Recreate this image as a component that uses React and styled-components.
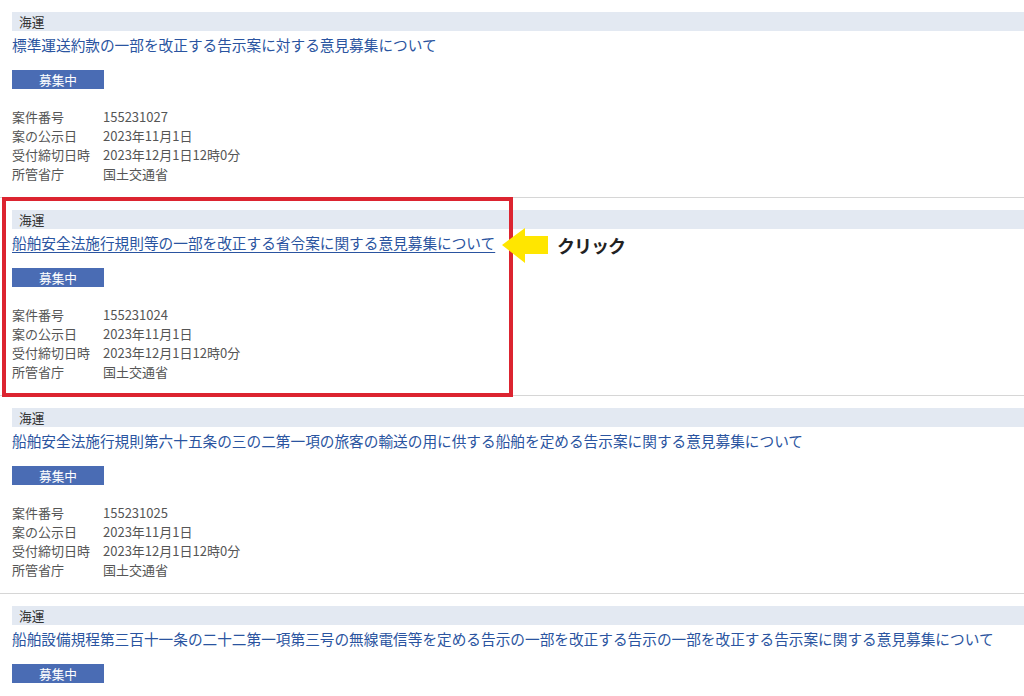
import React from 'react';
import styled, { createGlobalStyle } from 'styled-components';

const GlobalStyle = createGlobalStyle`
  html, body {
    margin: 0;
    padding: 0;
    background: #fff;
    font-family: "Noto Sans CJK JP", "Noto Sans", sans-serif;
  }
`;

const Page = styled.div`
  position: relative;
  width: 1024px;
  height: 696px;
  overflow: hidden;
  background: #fff;
`;

const Item = styled.div`
  padding: 12px 0 14px 12px;
  border-bottom: 1px solid #d6d6d6;
`;

const Category = styled.div`
  height: 19px;
  line-height: 19px;
  padding-left: 7px;
  background: #e3e9f2;
  color: #333;
  font-size: 12.7px;
`;

const Title = styled.a`
  display: block;
  margin-top: 3px;
  height: 22px;
  line-height: 22px;
  font-size: 14.66px;
  color: #2a54a0;
  white-space: nowrap;
  text-decoration: ${(p) => (p.$visited ? 'underline' : 'none')};
  text-underline-offset: 3px;
  cursor: pointer;
`;

const Badge = styled.div`
  margin-top: 14px;
  width: 92px;
  height: 19px;
  line-height: 19px;
  background: #4a6cb4;
  color: #fff;
  font-size: 12.7px;
  text-align: center;
`;

const Details = styled.dl`
  margin: 18px 0 0;
  display: grid;
  grid-template-columns: 91px auto;
  grid-auto-rows: 19px;
  line-height: 19px;
  font-size: 13px;
  color: #555;
`;

const Term = styled.dt`
  margin: 0;
`;

const Value = styled.dd`
  margin: 0;
`;

const Highlight = styled.div`
  position: absolute;
  left: 2px;
  top: 197px;
  width: 503px;
  height: 192px;
  border: 4px solid #dc2430;
  pointer-events: none;
`;

const Callout = styled.div`
  position: absolute;
  left: 502px;
  top: 227px;
  display: flex;
  align-items: center;
  gap: 8px;
`;

const CalloutText = styled.span`
  font-size: 18px;
  font-weight: 700;
  color: #222;
  letter-spacing: -1px;
`;

const Arrow = () => (
  <svg width="47" height="36" viewBox="0 0 47 36">
    <polygon points="0,18 23,1 23,9 46,9 46,27 23,27 23,36" fill="#ffe600" />
  </svg>
);

const items = [
  {
    title: '標準運送約款の一部を改正する告示案に対する意見募集について',
    no: '155231027',
  },
  {
    title: '船舶安全法施行規則等の一部を改正する省令案に関する意見募集について',
    no: '155231024',
    visited: true,
  },
  {
    title: '船舶安全法施行規則第六十五条の三の二第一項の旅客の輸送の用に供する船舶を定める告示案に関する意見募集について',
    no: '155231025',
  },
  {
    title: '船舶設備規程第三百十一条の二十二第一項第三号の無線電信等を定める告示の一部を改正する告示の一部を改正する告示案に関する意見募集について',
    no: '155231026',
    cut: true,
  },
];

export default function App() {
  return (
    <Page>
      <GlobalStyle />
      {items.map((it) => (
        <Item key={it.no}>
          <Category>海運</Category>
          <Title $visited={it.visited}>{it.title}</Title>
          <Badge>募集中</Badge>
          {!it.cut && (
            <Details>
              <Term>案件番号</Term>
              <Value>{it.no}</Value>
              <Term>案の公示日</Term>
              <Value>2023年11月1日</Value>
              <Term>受付締切日時</Term>
              <Value>2023年12月1日12時0分</Value>
              <Term>所管省庁</Term>
              <Value>国土交通省</Value>
            </Details>
          )}
        </Item>
      ))}
      <Highlight />
      <Callout>
        <Arrow />
        <CalloutText>クリック</CalloutText>
      </Callout>
    </Page>
  );
}
